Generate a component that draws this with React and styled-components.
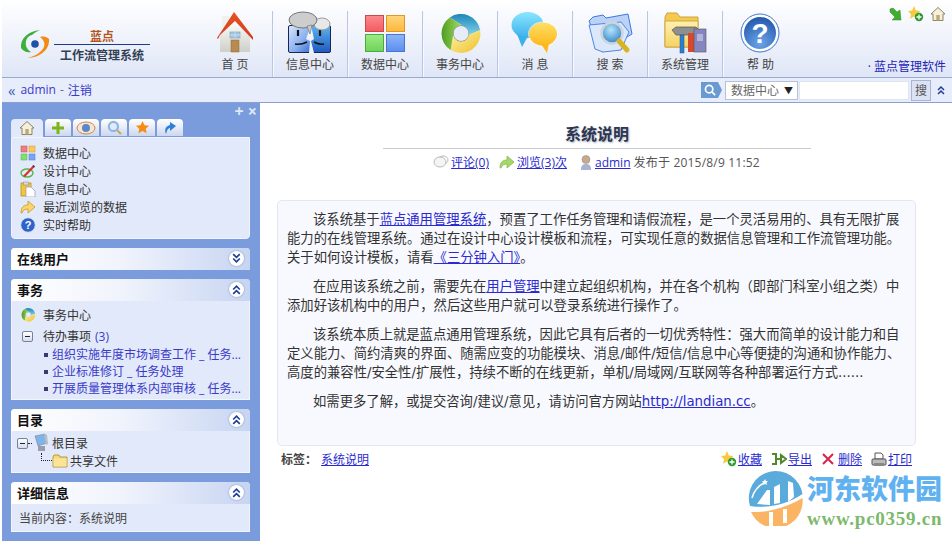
import React from 'react'
import styled, { createGlobalStyle } from 'styled-components'

const Global = createGlobalStyle`
  html, body { margin: 0; padding: 0; background: #fff; }
  body { font-family: "Open Sans", "Noto Sans CJK SC", sans-serif; font-size: 12px; color: #333; }
  * { box-sizing: border-box; }
  a { color: #2a2ad0; }
`

const Page = styled.div`
  position: relative;
  width: 952px;
  height: 541px;
  overflow: hidden;
  padding-left: 2px;
  display: flex;
  flex-direction: column;
`
const Header = styled.div`
  height: 78px;
  flex: none;
  display: flex;
  background: linear-gradient(#fff 0, #fafbfe 12px, #dfe6f6 100%);
  border-bottom: 1px solid #9aa9d2;
`
const Logo = styled.div`
  width: 196px;
  flex: none;
  display: flex;
  padding: 29px 0 0 18px;
`
const LogoText = styled.div`
  margin-left: 4px;
  width: 96px;
  text-align: center;
  div:first-child {
    color: #b5531a;
    font-size: 12px;
    font-weight: bold;
    line-height: 15px;
    border-bottom: 1px solid #1e3a8c;
    height: 16px;
  }
  div:last-child {
    color: #333f55;
    font-size: 12px;
    font-weight: bold;
    line-height: 20px;
    margin-top: 1px;
  }
`
const Nav = styled.div`
  display: flex;
  padding-top: 11px;
`
const NavItem = styled.div`
  width: 75px;
  height: 66px;
  display: flex;
  flex-direction: column;
  align-items: center;
  border-right: 1px solid #b9c6e6;
  box-shadow: 1px 0 0 #f6f8fd;
  color: #444;
  span { line-height: 16px; }
  svg { flex: none; }
  &:last-child { border-right: none; box-shadow: none; }
`
const TopRight = styled.div`
  margin-left: auto;
  width: 84px;
  padding: 5px 6px 0 0;
  display: flex;
  flex-direction: column;
  align-items: flex-end;
`
const QuickIcons = styled.div`
  display: flex;
  gap: 6px;
  align-items: center;
  height: 17px;
`
const Brand = styled.div`
  margin-top: 37px;
  color: #2424b8;
  white-space: nowrap;
  line-height: 16px;
`
const SubBar = styled.div`
  height: 25px;
  flex: none;
  display: flex;
  align-items: center;
  padding: 0 4px 0 6px;
  background: #e7edfa;
  border-bottom: 1px solid #8d9fd2;
`
const UserText = styled.div`
  color: #3a3ac8;
  font-size: 12px;
  display: flex;
  align-items: center;
  gap: 4px;
  margin-right: auto;
  padding-bottom: 1px;
  b { color: #3f62b8; font-size: 15px; font-weight: normal; line-height: 12px; margin-right: 1px; }
  i { color: #5a6a90; font-style: normal; }
`
const SearchBadge = styled.div`
  width: 21px;
  height: 16px;
  background: #6a9bd0;
  clip-path: polygon(0 0, 17px 0, 100% 50%, 17px 100%, 0 100%);
  display: flex;
  align-items: center;
  padding-left: 3px;
  margin-right: 3px;
`
const SelectBox = styled.div`
  width: 73px;
  height: 19px;
  background: #fff;
  border: 1px solid #b7c0d6;
  display: flex;
  align-items: center;
  justify-content: space-between;
  padding: 0 4px 0 5px;
  color: #666;
  em { font-style: normal; color: #222; font-size: 9px; }
`
const SearchInput = styled.div`
  width: 110px;
  height: 19px;
  margin-left: 1px;
  background: #fff;
  border: 1px solid #dfe4f0;
`
const SearchButton = styled.div`
  width: 20px;
  height: 21px;
  margin-left: 2px;
  background: #dbe2f3;
  border: 1px solid #aab4d0;
  color: #555;
  text-align: center;
  line-height: 19px;
`
const Collapse = styled.div`
  width: 14px;
  margin-left: 3px;
  display: flex;
  justify-content: center;
`
const Main = styled.div`
  flex: 1;
  display: flex;
  min-height: 0;
`
const Sidebar = styled.div`
  width: 258px;
  flex: none;
  background: #7a9cdc;
  padding: 0 9px;
`
const SideTools = styled.div`
  display: flex;
  justify-content: flex-end;
  align-items: center;
  gap: 3px;
  height: 16px;
  margin-right: -6px;
  color: #dfe7f8;
  font-size: 16px;
  font-weight: bold;
  line-height: 16px;
`
const Tabs = styled.div`
  display: flex;
  gap: 2px;
  height: 18px;
`
const Tab = styled.div`
  width: ${p => (p.$active ? '32px' : '26px')};
  height: ${p => (p.$active ? '18px' : '17px')};
  border-radius: 4px 4px 0 0;
  background: ${p => (p.$active ? '#e2e9fa' : 'linear-gradient(#fff, #ccd7ef)')};
  display: flex;
  align-items: center;
  justify-content: center;
`
const TabBody = styled.div`
  height: 102px;
  width: 239px;
  background: #e2e9fa;
  border: 1px solid #f2f5fd;
  border-radius: 0 0 4px 4px;
  padding: 6px 0 0 8px;
  margin-bottom: 9px;
`
const Row = styled.div`
  display: flex;
  align-items: center;
  height: 18px;
  color: #333;
  svg { flex: none; width: 16px; height: 16px; margin-right: 7px; }
`
const Panel = styled.div`
  width: 239px;
  margin-bottom: 9px;
  background: #e2e9fa;
  border: 1px solid #f4f6fd;
  border-top: none;
  border-bottom-width: ${p => (p.$closed ? '0' : '1px')};
  border-radius: 4px 4px 0 0;
`
const PanelHead = styled.div`
  height: 22px;
  margin: 0 -1px;
  padding: 0 6px 2px;
  border-radius: 4px 4px 0 0;
  background: linear-gradient(90deg, #fff, #f1f4fc 45%, #c7d5f2);
  display: flex;
  align-items: center;
  justify-content: space-between;
  color: #111;
  font-size: 13px;
  font-weight: bold;
`
const Round = styled.div`
  width: 15px;
  height: 15px;
  border-radius: 50%;
  background: #fff;
  box-shadow: 0 0 2px #7b8ab0;
  display: flex;
  align-items: center;
  justify-content: center;
`
const TaskBody = styled.div`
  padding: 3px 0 0 8px;
  height: 98px;
`
const TaskRow = styled.div`
  height: ${p => p.$h || 22}px;
  display: flex;
  align-items: center;
  color: #333;
  svg { width: 16px; height: 16px; margin-right: 7px; flex: none; }
  span { color: #3a3ac8; margin-left: 4px; }
`
const Minus = styled.div`
  width: 11px;
  height: 11px;
  flex: none;
  margin: 0 ${p => p.$right ?? 10}px 0 ${p => p.$left ?? 2}px;
  border: 1px solid #78829a;
  border-radius: 2px;
  background: linear-gradient(#fff, #d5dcec);
  display: flex;
  align-items: center;
  justify-content: center;
  &::after { content: ""; width: 5px; height: 1px; background: #223; }
`
const TaskLink = styled.div`
  height: 17px;
  line-height: 17px;
  padding-left: 32px;
  position: relative;
  color: #3a3ac8;
  white-space: nowrap;
  &::before {
    content: "";
    position: absolute;
    left: 24px;
    top: 7px;
    width: 4px;
    height: 4px;
    background: #3a3a70;
  }
`
const Tree = styled.div`
  height: 41px;
  padding: 2px 0 0 5px;
`
const TreeRow = styled.div`
  display: flex;
  align-items: center;
  height: ${p => p.$h}px;
  color: #333;
  padding-left: ${p => p.$indent || 0}px;
  svg { flex: none; }
`
const Dotted = styled.div`
  width: ${p => p.$w}px;
  height: ${p => p.$h}px;
  flex: none;
  border-bottom: 1px dotted #222;
  border-left: ${p => (p.$corner ? '1px dotted #222' : 'none')};
  align-self: ${p => (p.$corner ? 'flex-start' : 'center')};
`
const TreeLabel = styled.span`
  margin-left: 2px;
`
const Detail = styled.div`
  height: 27px;
  line-height: 29px;
  padding-left: 7px;
  color: #444;
`
const Content = styled.div`
  flex: 1;
  padding: 21px 36px 0 17px;
  min-width: 0;
`
const Title = styled.div`
  width: 428px;
  margin: 0 0 0 106px;
  height: 25px;
  text-align: center;
  font-size: 16px;
  font-weight: bold;
  line-height: 20px;
  color: #2c3650;
  text-shadow: 1px 1px 2px #b0b8c8;
  border-bottom: 1px solid #c9ccd4;
`
const Meta = styled.div`
  display: flex;
  justify-content: center;
  align-items: center;
  height: 26px;
  color: #555;
  gap: 2px;
  a { margin-right: 8px; }
  a:nth-of-type(2) { margin-right: 10px; }
  span { margin-left: -7px; letter-spacing: 0.2px; }
`
const Article = styled.div`
  height: 246px;
  margin-top: 25px;
  padding: 9px 9px 0 9px;
  background: #f8f9fe;
  border: 1px solid #e4e7f2;
  border-radius: 5px;
  font-family: "DejaVu Sans", "Noto Sans CJK SC", sans-serif;
  font-size: 13.33px;
  line-height: 19px;
  color: #333;
  p { margin: 0 0 10px; text-indent: 26px; }
`
const Footer = styled.div`
  display: flex;
  align-items: center;
  height: 26px;
  padding: 0 4px;
  b { color: #444; margin-right: 4px; }
`
const FootLinks = styled.div`
  margin-left: auto;
  display: flex;
  gap: 9px;
  div { width: 41px; display: flex; align-items: center; justify-content: flex-end; gap: 1px; }
  a { white-space: nowrap; }
  svg { flex: none; }
`
const Mark = styled.div`
  position: absolute;
  left: 748px;
  top: 470px;
  width: 200px;
  height: 60px;
  display: flex;
  pointer-events: none;
`
const MarkText = styled.div`
  margin-left: 3px;
  font-family: "Liberation Serif", "Noto Sans CJK SC", serif;
  font-weight: bold;
  white-space: nowrap;
  div:first-child {
    font-family: "Noto Sans CJK SC", sans-serif;
    font-size: 27px;
    line-height: 36px;
    color: #5fb2ef;
    font-weight: 900;
  }
  div:last-child {
    margin-top: 3px;
    font-size: 19px;
    line-height: 20px;
    color: #7cb96c;
    letter-spacing: 0.75px;
  }
`

const HomeSmall = ({ s = 16 }) => (
  <svg width={s} height={s} viewBox="0 0 16 16"><path d="M8 1.500L1 8h2v6.500h10V8h2z" fill="#f6eed8" stroke="#8b8467" /><rect x="6.300" y="9" width="3.400" height="5.500" fill="#b9a878" /></svg>
)
const SmallGrid = () => (
  <svg viewBox="0 0 16 16"><rect x="1" y="1" width="6" height="6" fill="#f27d7d" stroke="#b55" strokeWidth=".5" /><rect x="9" y="1" width="6" height="6" fill="#fbc95e" stroke="#c93" strokeWidth=".5" /><rect x="1" y="9" width="6" height="6" fill="#84dd74" stroke="#5a5" strokeWidth=".5" /><rect x="9" y="9" width="6" height="6" fill="#78a6f2" stroke="#57c" strokeWidth=".5" /></svg>
)
const Pencil = () => (
  <svg viewBox="0 0 16 16"><ellipse cx="7" cy="10" rx="6" ry="4" fill="none" stroke="#4cb848" strokeWidth="1.400" /><path d="M3 13L13 2.500l1.500 1.500L5 14z" fill="#d9302a" /><path d="M12.500 3l1-1 1.500 1.500-1 1z" fill="#333" /></svg>
)
const Clip = () => (
  <svg viewBox="0 0 16 16"><rect x="1" y="2" width="10" height="13" fill="#f1c53c" stroke="#b28a1e" strokeWidth=".7" /><rect x="3.500" y="1" width="5" height="3" fill="#d8d8d8" stroke="#888" strokeWidth=".5" /><path d="M6 6h5l4 4v6H6z" fill="#fff" stroke="#99a" strokeWidth=".7" /></svg>
)
const Curve = ({ fill = '#fbd66a', stroke = '#c8962c', s = 16 }) => (
  <svg width={s} height={s} viewBox="0 0 16 16"><path d="M1 14c0-6 3-8 7-8V2l7 6-7 6v-4c-3 0-5 1-6 4z" fill={fill} stroke={stroke} strokeWidth=".8" /></svg>
)
const Help = ({ s = 16 }) => (
  <svg width={s} height={s} viewBox="0 0 16 16"><circle cx="8" cy="8" r="7.300" fill="#2f63c8" stroke="#dfe3ee" strokeWidth="1" /><text x="8" y="12" fontSize="11" fontWeight="bold" fill="#fff" textAnchor="middle" fontFamily="Liberation Sans">?</text></svg>
)

// ring segment, outer and inner edges start at different angles for the swirl
const seg = (a0, a1, b0, b1, R = 19.5, r = 8, cx = 24, cy = 22.5) => {
  const pt = (rad, deg) => {
    const t = (deg * Math.PI) / 180
    return `${(cx + rad * Math.cos(t)).toFixed(2)} ${(cy + rad * Math.sin(t)).toFixed(2)}`
  }
  return `M${pt(R, a0)}A${R} ${R} 0 ${a1 - a0 > 180 ? 1 : 0} 1 ${pt(R, a1)}L${pt(r, b1)}A${r} ${r} 0 0 0 ${pt(r, b0)}Z`
}
const Ring = ({ s = 46 }) => (
  <svg width={s} height={s} viewBox="0 0 46 46">
    <defs>
      <linearGradient id="rBlue" x1="0" y1="0" x2="0" y2="1"><stop offset="0" stopColor="#1f86b8" /><stop offset="1" stopColor="#7fd2ec" /></linearGradient>
      <linearGradient id="rYel" x1="0" y1="0" x2="1" y2="1"><stop offset="0" stopColor="#fff3a8" /><stop offset="1" stopColor="#edc02a" /></linearGradient>
      <linearGradient id="rGrn" x1="0" y1="0" x2="1" y2="0"><stop offset="0" stopColor="#4c9e20" /><stop offset="1" stopColor="#a9dc62" /></linearGradient>
    </defs>
    <circle cx="24" cy="22.500" r="9" fill="#e6ecf8" />
    <path d="M24 14.500a8 8 0 1 0 .1 0" fill="none" stroke="#6d7a8c" strokeWidth="1" />
    <path d={seg(-125, -10, -80, 10)} fill="url(#rBlue)" />
    <path d={seg(-10, 122, 10, 170)} fill="url(#rYel)" />
    <path d={seg(122, 235, 170, 280)} fill="url(#rGrn)" />
  </svg>
)
const Chevrons = ({ up, color = '#1c3f94', s = 11 }) => (
  <svg width={s} height={s} viewBox="0 0 10 10" fill="none" stroke={color} strokeWidth="1.500" style={{ transform: up ? 'none' : 'scaleY(-1)' }}>
    <path d="M2 5l3-3 3 3M2 9l3-3 3 3" />
  </svg>
)

const NavHome = () => (
  <svg width="46" height="46" viewBox="0 0 46 46">
    <defs>
      <linearGradient id="wall" x1="0" y1="0" x2="0" y2="1"><stop offset="0" stopColor="#fff" /><stop offset="1" stopColor="#cfcfc9" /></linearGradient>
      <linearGradient id="roof" x1="0" y1="0" x2="0" y2="1"><stop offset="0" stopColor="#e8531f" /><stop offset="1" stopColor="#d23c22" /></linearGradient>
    </defs>
    <rect x="10" y="5" width="7" height="12" fill="#f0f0ee" />
    <path d="M8 22L23 8l15 14v19H8z" fill="url(#wall)" />
    <path d="M5 27L22 1l19 25v3L23 10 8 24l-2 4z" fill="url(#roof)" />
    <rect x="18" y="21" width="10" height="6" fill="#a4c6e0" stroke="#7f9fb8" strokeWidth=".6" />
    <path d="M23 21v6M18 24h10" stroke="#dfeaf3" strokeWidth=".6" />
    <rect x="19" y="29" width="8" height="12" fill="#b88a50" stroke="#8f6a3a" strokeWidth=".5" />
  </svg>
)
const NavFaces = () => (
  <svg width="46" height="46" viewBox="0 0 46 46">
    <defs>
      <linearGradient id="faceL" x1="0" y1="0" x2="1" y2="1"><stop offset="0" stopColor="#dbe8fc" /><stop offset=".6" stopColor="#88aef0" /><stop offset="1" stopColor="#3c6fd2" /></linearGradient>
      <linearGradient id="faceR" x1="0" y1="0" x2="0" y2="1"><stop offset="0" stopColor="#5fb4f0" /><stop offset="1" stopColor="#1f5ac0" /></linearGradient>
    </defs>
    <rect x="1.500" y="14.500" width="22" height="27" rx="1.500" fill="url(#faceL)" stroke="#1a2550" />
    <rect x="23.500" y="14.500" width="20" height="27" rx="1.500" fill="url(#faceR)" stroke="#1a2550" />
    <path d="M24 14l-5 14 4 2-1 12h5l-3-12 3-2z" fill="#eef2fa" />
    <path d="M11 19v6M33 19v6" stroke="#111" strokeWidth="2.200" />
    <path d="M8 33q6 1 12-2M27 31q5 3 10 2" stroke="#111" strokeWidth="1.500" fill="none" />
    <ellipse cx="35" cy="13" rx="8" ry="6" fill="#e8e8e8" stroke="#999" />
    <ellipse cx="16" cy="9" rx="14" ry="8" fill="#cdcdcd" stroke="#777" />
    <path d="M20 15l3 8 2-9z" fill="#cdcdcd" stroke="#777" strokeWidth=".7" />
  </svg>
)
const NavGrid = () => (
  <svg width="46" height="46" viewBox="0 0 46 46">
    <defs>
      <linearGradient id="cellR" x1="0" y1="0" x2="0" y2="1"><stop offset="0" stopColor="#fb8a8e" /><stop offset="1" stopColor="#f45a60" /></linearGradient>
      <linearGradient id="cellO" x1="0" y1="0" x2="0" y2="1"><stop offset="0" stopColor="#fed67c" /><stop offset="1" stopColor="#fdb63c" /></linearGradient>
      <linearGradient id="cellG" x1="0" y1="0" x2="0" y2="1"><stop offset="0" stopColor="#9eea84" /><stop offset="1" stopColor="#6dd35a" /></linearGradient>
      <linearGradient id="cellB" x1="0" y1="0" x2="0" y2="1"><stop offset="0" stopColor="#8cb4f8" /><stop offset="1" stopColor="#5a8ef0" /></linearGradient>
    </defs>
    <rect x="3.500" y="4.500" width="18" height="16" fill="url(#cellR)" stroke="#c94a4a" />
    <rect x="24.500" y="4.500" width="18" height="16" fill="url(#cellO)" stroke="#dd9a22" />
    <rect x="3.500" y="23.500" width="18" height="17" fill="url(#cellG)" stroke="#4ea844" />
    <rect x="24.500" y="23.500" width="18" height="17" fill="url(#cellB)" stroke="#4a74c8" />
  </svg>
)
const NavChat = () => (
  <svg width="48" height="46" viewBox="0 0 48 46">
    <defs>
      <linearGradient id="chatB" x1="0" y1="0" x2="0" y2="1"><stop offset="0" stopColor="#8ae6ff" /><stop offset="1" stopColor="#3cb0ea" /></linearGradient>
      <linearGradient id="chatY" x1="0" y1="0" x2="0" y2="1"><stop offset="0" stopColor="#ffdf66" /><stop offset="1" stopColor="#fdb81e" /></linearGradient>
    </defs>
    <ellipse cx="16.500" cy="14" rx="16" ry="13" fill="url(#chatB)" />
    <path d="M6 23l5 13 5-9z" fill="#3cb0ea" />
    <ellipse cx="32" cy="23" rx="15" ry="12.500" fill="#fff" opacity=".6" />
    <ellipse cx="32" cy="23" rx="14" ry="11.500" fill="url(#chatY)" />
    <path d="M30 33l6 9 2-10z" fill="#fdb81e" />
  </svg>
)
const NavSearch = () => (
  <svg width="46" height="46" viewBox="0 0 46 46">
    <defs>
      <radialGradient id="glass" cx="45%" cy="35%" r="70%"><stop offset="0" stopColor="#b8e4f8" /><stop offset="1" stopColor="#2a7fc8" /></radialGradient>
    </defs>
    <path d="M2 10l4-4 10-2 3 3 22-4 4 20-30 18z" fill="#b9d2f6" stroke="#3b78e0" />
    <path d="M2 14l32-3 8 10-8 18-18 2-8-3z" fill="#dbe8fb" stroke="#4d86e4" />
    <circle cx="25" cy="22" r="10.500" fill="url(#glass)" stroke="#cfd4dc" strokeWidth="2.500" />
    <path d="M32 30l8 9" stroke="#d8b420" strokeWidth="5" strokeLinecap="round" />
  </svg>
)
const NavTools = () => (
  <svg width="46" height="46" viewBox="0 0 46 46">
    <defs>
      <linearGradient id="fold" x1="0" y1="0" x2="0" y2="1"><stop offset="0" stopColor="#fff0b0" /><stop offset="1" stopColor="#f6d264" /></linearGradient>
    </defs>
    <path d="M3 6l2-4h10l3 4h18v30H3z" fill="#f4c94e" stroke="#c9a440" />
    <path d="M3 10h33v26H3z" fill="url(#fold)" stroke="#cfa840" />
    <path d="M10 19l4-3h20l3 3-3 5H14z" fill="#8f8f8f" stroke="#444" strokeWidth=".6" />
    <rect x="18" y="24" width="4" height="18" fill="#2f7fd0" stroke="#1a4f90" strokeWidth=".5" />
    <rect x="26" y="22" width="6" height="19" fill="#d8492c" />
    <rect x="32" y="18" width="12" height="23" fill="#8585c0" stroke="#555" strokeWidth=".6" />
    <rect x="35" y="23" width="6" height="7" fill="#b3b3dc" />
  </svg>
)
const NavHelp = () => (
  <svg width="46" height="46" viewBox="0 0 46 46">
    <defs><radialGradient id="helpGrad" cx="50%" cy="80%" r="80%"><stop offset="0" stopColor="#6da5e8" /><stop offset="1" stopColor="#1f55ac" /></radialGradient></defs>
    <circle cx="22" cy="22" r="17" fill="url(#helpGrad)" stroke="#fff" strokeWidth="2" />
    <circle cx="22" cy="22" r="19" fill="none" stroke="#3f78d2" />
    <text x="22" y="32" fontSize="28" fontWeight="bold" fill="#fff" textAnchor="middle" fontFamily="Liberation Sans">?</text>
  </svg>
)
const LogoMark = () => (
  <svg width="30" height="30" viewBox="0 0 30 30">
    <path d="M1 19C0 10 8 2 20 1c-4 2-6 3-8 5-5 1-7 6-6 11 1 3 3 5 5 6-4 1-8-1-10-4z" fill="#3fae3b" />
    <path d="M29 10c1 9-7 18-21 19 5-2 9-3 12-6 4-3 5-7 4-10-1-2-2-4-4-5 4-1 7 0 9 2z" fill="#f28a14" />
    <circle cx="15" cy="15" r="3.800" fill="#1f4fa8" />
  </svg>
)
const Comment = () => (
  <svg width="16" height="16" viewBox="0 0 16 16"><ellipse cx="10" cy="6" rx="5" ry="4" fill="#fff" stroke="#bbb" /><ellipse cx="7" cy="8" rx="6" ry="5" fill="#f4f4f4" stroke="#bbb" /></svg>
)
const User = () => (
  <svg width="14" height="15" viewBox="0 0 14 15"><circle cx="7" cy="4.500" r="4" fill="#c9a98a" stroke="#888" strokeWidth=".5" /><path d="M2 15c0-5 2-6 5-6s5 1 5 6z" fill="#a8b4d0" /></svg>
)
const Computer = () => (
  <svg width="18" height="20" viewBox="0 0 18 20"><path d="M3 3l10-2 2 9-9 3z" fill="#7fb4e8" stroke="#778" strokeWidth=".5" /><path d="M12 1l3 1 1 9-2 1z" fill="#b8bcc8" /><path d="M6 13h7v5H6z" fill="#9a9ab0" /></svg>
)
const Folder = () => (
  <svg width="16" height="14" viewBox="0 0 16 14"><path d="M1 3l1-2h5l1 2h7v10H1z" fill="#f7d875" stroke="#a88828" strokeWidth=".8" /><rect x="1.500" y="4.500" width="13" height="8" fill="#fbe496" /></svg>
)
const Fav = () => (
  <svg width="16" height="16" viewBox="0 0 16 16"><path d="M6 0l1.800 4.500 4.600.6-3.400 3.100.9 4.600L6 10.400l-3.900 2.400.9-4.600L0 5.100l4.200-.6z" fill="#f6c93f" /><circle cx="11" cy="11" r="4.200" fill="#2b9a2f" /><path d="M8.500 11h5M11 8.500v5" stroke="#fff" strokeWidth="1.300" /></svg>
)
const Export = () => (
  <svg width="16" height="14" viewBox="0 0 16 14"><path d="M1 2h4v10H1M5 7h5V3l5 4-5 4V8" fill="none" stroke="#4c8a2c" strokeWidth="2" /></svg>
)
const Del = () => (
  <svg width="12" height="12" viewBox="0 0 12 12" style={{ margin: '0 3px 0 1px' }}><path d="M1 1l10 10M11 1L1 11" stroke="#dc2348" strokeWidth="2" /></svg>
)
const Printer = () => (
  <svg width="16" height="15" viewBox="0 0 16 15"><path d="M4 1h6l2 2v4H4z" fill="#fff" stroke="#555" /><rect x="1" y="7" width="14" height="6" rx="1" fill="#bbb" stroke="#555" /><rect x="3" y="11" width="10" height="3" fill="#888" /></svg>
)
const MagSmall = ({ s = 14, ring = '#fff', glass = 'none', handle = '#fff' }) => (
  <svg width={s} height={s} viewBox="0 0 14 14"><circle cx="6" cy="6" r="4.300" fill={glass} stroke={ring} strokeWidth="2" /><path d="M9.500 9.500l3.500 3.500" stroke={handle} strokeWidth="2" /></svg>
)
const LeafArrow = () => (
  <svg width="13" height="14" viewBox="0 0 13 14"><path d="M1 2l3-1 4 4 3-2 1 10-9 0 3-3-5-5z" fill="#3fae2e" stroke="#2a8a22" strokeWidth=".5" /></svg>
)
const MarkLogo = () => (
  <svg width="56" height="56" viewBox="0 0 56 56">
    <path d="M2 36A27 27 0 1 1 54.500 24C40 34 20 39 2 36Z" fill="#5aabdb" />
    <path d="M3 42C20 43 40 37 54.500 28A27 27 0 0 1 3 42Z" fill="#fbb364" />
    <path d="M9 34L19 20l3 0 0 15zM26 34V17l6-3v19zM40 32l0-21 5 2 1 14z" fill="#fff" />
    <path d="M21 42h4v14h-4zM35 39h4v14h-4z" fill="#fff" />
    <path d="M4 28C6 21 11 15 18 12" fill="none" stroke="#fff" strokeWidth="1.500" />
    <path d="M17 9l1 2 2 .3-1.500 1.500.4 2.200L17 14l-1.900 1 .4-2.200L14 11.300l2-.3z" fill="#fff" />
  </svg>
)

const navItems = [
  { label: '首 页', icon: NavHome },
  { label: '信息中心', icon: NavFaces },
  { label: '数据中心', icon: NavGrid },
  { label: '事务中心', icon: Ring },
  { label: '消 息', icon: NavChat },
  { label: '搜 索', icon: NavSearch },
  { label: '系统管理', icon: NavTools },
  { label: '帮 助', icon: NavHelp },
]

const tabIcons = [
  <HomeSmall key="h" />,
  <svg key="p" width="14" height="14" viewBox="0 0 14 14"><path d="M5.500 1h3v4.500H13v3H8.500V13h-3V8.500H1v-3h4.500z" fill="#7cb518" /></svg>,
  <svg key="e" width="20" height="14" viewBox="0 0 20 14"><ellipse cx="10" cy="7" rx="9" ry="6" fill="#f6e6d2" stroke="#c98a50" /><circle cx="10" cy="7" r="4" fill="#5b88c8" /></svg>,
  <MagSmall key="m" s={15} ring="#8fb4e4" glass="#dfeafa" handle="#c9a860" />,
  <svg key="s" width="15" height="15" viewBox="0 0 16 16"><path d="M8 1l2.100 4.500 4.900.6-3.600 3.300 1 4.800L8 11.800l-4.400 2.400 1-4.800L1 6.100l4.900-.6z" fill="#f68c14" /></svg>,
  <svg key="a" width="14" height="15" viewBox="0 0 14 15"><path d="M3 14C1 9 3 6 7 5V2l6 4-6 5V8C5 8 4 10 3 14z" fill="#2c7fdc" /></svg>,
]

export default function App() {
  return (
    <Page>
      <Global />
      <Header>
        <Logo>
          <LogoMark />
          <LogoText>
            <div>蓝点</div>
            <div>工作流管理系统</div>
          </LogoText>
        </Logo>
        <Nav>
          {navItems.map(({ label, icon: Icon }) => (
            <NavItem key={label}>
              <Icon />
              <span>{label}</span>
            </NavItem>
          ))}
        </Nav>
        <TopRight>
          <QuickIcons>
            <LeafArrow />
            <Fav />
            <HomeSmall />
          </QuickIcons>
          <Brand>· 蓝点管理软件</Brand>
        </TopRight>
      </Header>
      <SubBar>
        <UserText><b>«</b> admin <i>-</i> 注销</UserText>
        <SearchBadge><MagSmall s={12} /></SearchBadge>
        <SelectBox>数据中心<em>▼</em></SelectBox>
        <SearchInput />
        <SearchButton>搜</SearchButton>
        <Collapse><Chevrons up s={10} /></Collapse>
      </SubBar>
      <Main>
        <Sidebar>
          <SideTools>+ ×</SideTools>
          <Tabs>
            {tabIcons.map((icon, i) => <Tab key={i} $active={i === 0}>{icon}</Tab>)}
          </Tabs>
          <TabBody>
            <Row><SmallGrid />数据中心</Row>
            <Row><Pencil />设计中心</Row>
            <Row><Clip />信息中心</Row>
            <Row><Curve />最近浏览的数据</Row>
            <Row><Help />实时帮助</Row>
          </TabBody>
          <Panel $closed>
            <PanelHead>在线用户<Round><Chevrons /></Round></PanelHead>
          </Panel>
          <Panel>
            <PanelHead>事务<Round><Chevrons up /></Round></PanelHead>
            <TaskBody>
              <TaskRow><Ring s={16} />事务中心</TaskRow>
              <TaskRow $h={20}><Minus />待办事项<span>(3)</span></TaskRow>
              <TaskLink>组织实施年度市场调查工作 _ 任务...</TaskLink>
              <TaskLink>企业标准修订 _ 任务处理</TaskLink>
              <TaskLink>开展质量管理体系内部审核 _ 任务...</TaskLink>
            </TaskBody>
          </Panel>
          <Panel>
            <PanelHead>目录<Round><Chevrons up /></Round></PanelHead>
            <Tree>
              <TreeRow $h={20}>
                <Minus $left={0} $right={0} /><Dotted $w={4} $h={1} />
                <Computer />
                <TreeLabel>根目录</TreeLabel>
              </TreeRow>
              <TreeRow $h={16} $indent={24}>
                <Dotted $corner $w={11} $h={8} />
                <Folder />
                <TreeLabel>共享文件</TreeLabel>
              </TreeRow>
            </Tree>
          </Panel>
          <Panel>
            <PanelHead>详细信息<Round><Chevrons up /></Round></PanelHead>
            <Detail>当前内容：系统说明</Detail>
          </Panel>
        </Sidebar>
        <Content>
          <Title>系统说明</Title>
          <Meta>
            <Comment /><a href="#c">评论(0)</a>
            <Curve fill="#a5d86a" stroke="#88b858" /><a href="#v">浏览(3)次</a>
            <User /><a href="#u">admin</a>
            <span>发布于 2015/8/9 11:52</span>
          </Meta>
          <Article>
            <p>该系统基于<a href="#a">蓝点通用管理系统</a>，预置了工作任务管理和请假流程，是一个灵活易用的、具有无限扩展能力的在线管理系统。通过在设计中心设计模板和流程，可实现任意的数据信息管理和工作流管理功能。关于如何设计模板，请看<a href="#b">《三分钟入门》</a>。</p>
            <p>在应用该系统之前，需要先在<a href="#d">用户管理</a>中建立起组织机构，并在各个机构（即部门科室小组之类）中添加好该机构中的用户，然后这些用户就可以登录系统进行操作了。</p>
            <p>该系统本质上就是蓝点通用管理系统，因此它具有后者的一切优秀特性：强大而简单的设计能力和自定义能力、简约清爽的界面、随需应变的功能模块、消息/邮件/短信/信息中心等便捷的沟通和协作能力、高度的兼容性/安全性/扩展性，持续不断的在线更新，单机/局域网/互联网等各种部署运行方式......</p>
            <p>如需更多了解，或提交咨询/建议/意见，请访问官方网站<a href="#e">http://landian.cc</a>。</p>
          </Article>
          <Footer>
            <b>标签：</b><a href="#t">系统说明</a>
            <FootLinks>
              <div><Fav /><a href="#f">收藏</a></div>
              <div><Export /><a href="#x">导出</a></div>
              <div><Del /><a href="#r">删除</a></div>
              <div><Printer /><a href="#p">打印</a></div>
            </FootLinks>
          </Footer>
        </Content>
      </Main>
      <Mark>
        <MarkLogo />
        <MarkText>
          <div>河东软件园</div>
          <div>www.pc0359.cn</div>
        </MarkText>
      </Mark>
    </Page>
  )
}
